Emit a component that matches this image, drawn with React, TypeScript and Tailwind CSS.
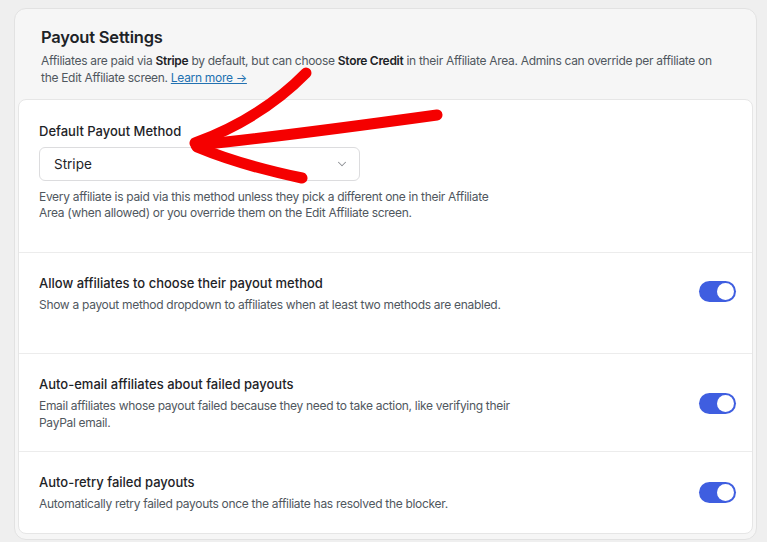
import { ChevronDown } from 'lucide-react';

function Toggle({ className = '' }: { className?: string }) {
    return (
        <div className={`w-[37px] h-[21px] rounded-full bg-[#3f5ee0] flex items-center justify-end px-[2px] shrink-0 ${className}`}>
            <div className="w-[17px] h-[17px] rounded-full bg-white" />
        </div>
    );
}

interface RowProps {
    title: string;
    desc: string;
    className?: string;
    toggleClass?: string;
}

function ToggleRow({ title, desc, className = '', toggleClass = '' }: RowProps) {
    return (
        <div className={`flex items-center justify-between pl-[20px] pr-[16px] border-t border-[#ececec] ${className}`}>
            <div className="max-w-[480px]">
                <p className="text-[13px] font-medium text-[#1e2327] leading-[18px]">{title}</p>
                <p className="text-[12px] tracking-[-0.3px] text-[#50575e] leading-[17px] mt-[4px]">{desc}</p>
            </div>
            <Toggle className={toggleClass} />
        </div>
    );
}

export default function App() {
    return (
        <div className="relative w-[767px] h-[542px] bg-[#efefef] pt-[8px] pl-[14px] pr-[10px] font-['Inter',sans-serif] overflow-hidden">
            <div className="rounded-[12px] border border-[#e2e2e2] bg-[#f6f6f6] px-[3px] pt-[3px] pb-[5px] flex flex-col">
                {/* Header */}
                <div className="px-[23px] pt-[14px] pb-[13px]">
                    <h2 className="text-[16.5px] tracking-[-0.2px] font-semibold text-[#1d2327] leading-[22px]">Payout Settings</h2>
                    <p className="mt-[4px] text-[12px] tracking-[-0.3px] text-[#50575e] leading-[17px] max-w-[690px]">
                        Affiliates are paid via <strong className="font-semibold text-[#1d2327]">Stripe</strong> by default, but can choose <strong className="font-semibold text-[#1d2327]">Store Credit</strong> in their Affiliate Area. Admins can override per affiliate on the Edit Affiliate screen.{' '}
                        <a className="text-[#2271b1] underline">Learn more →</a>
                    </p>
                </div>

                {/* Settings card */}
                <div className="bg-white rounded-[8px] border border-[#e6e6e6] flex flex-col">
                    <div className="pl-[20px] pr-[16px] pt-[22px] pb-[31px]">
                        <p className="text-[13px] font-medium text-[#1e2327] leading-[18px]">Default Payout Method</p>
                        <div className="mt-[7px] w-[321px] h-[34px] rounded-[6px] border border-[#dcdcde] flex items-center justify-between pl-[14px] pr-[10px]">
                            <span className="text-[13.5px] text-[#1e2327]">Stripe</span>
                            <ChevronDown size={14} className="text-[#8c8f94]" strokeWidth={1.75} />
                        </div>
                        <p className="mt-[8px] text-[12px] tracking-[-0.3px] text-[#50575e] leading-[16px] max-w-[470px]">
                            Every affiliate is paid via this method unless they pick a different one in their Affiliate Area (when allowed) or you override them on the Edit Affiliate screen.
                        </p>
                    </div>

                    <ToggleRow
                        className="pt-[21px] pb-[40px]"
                        toggleClass="-mt-[5px]"
                        title="Allow affiliates to choose their payout method"
                        desc="Show a payout method dropdown to affiliates when at least two methods are enabled."
                    />
                    <ToggleRow
                        className="pt-[21px] pb-[20px]"
                        title="Auto-email affiliates about failed payouts"
                        desc="Email affiliates whose payout failed because they need to take action, like verifying their PayPal email."
                    />
                    <ToggleRow
                        className="pt-[21px] pb-[21px]"
                        title="Auto-retry failed payouts"
                        desc="Automatically retry failed payouts once the affiliate has resolved the blocker."
                    />
                </div>
            </div>

            {/* Red annotation arrow */}
            <svg className="absolute inset-0 pointer-events-none" width="767" height="542" viewBox="0 0 767 542">
                <g fill="none" stroke="#f50000" strokeLinecap="round">
                    <path d="M196 145 Q 270 138 437 115" strokeWidth="11" />
                    <path d="M195 143 Q 262 118 306 73" strokeWidth="11" />
                    <path d="M197 147 Q 240 165 302 178" strokeWidth="11" />
                </g>
            </svg>
        </div>
    );
}
